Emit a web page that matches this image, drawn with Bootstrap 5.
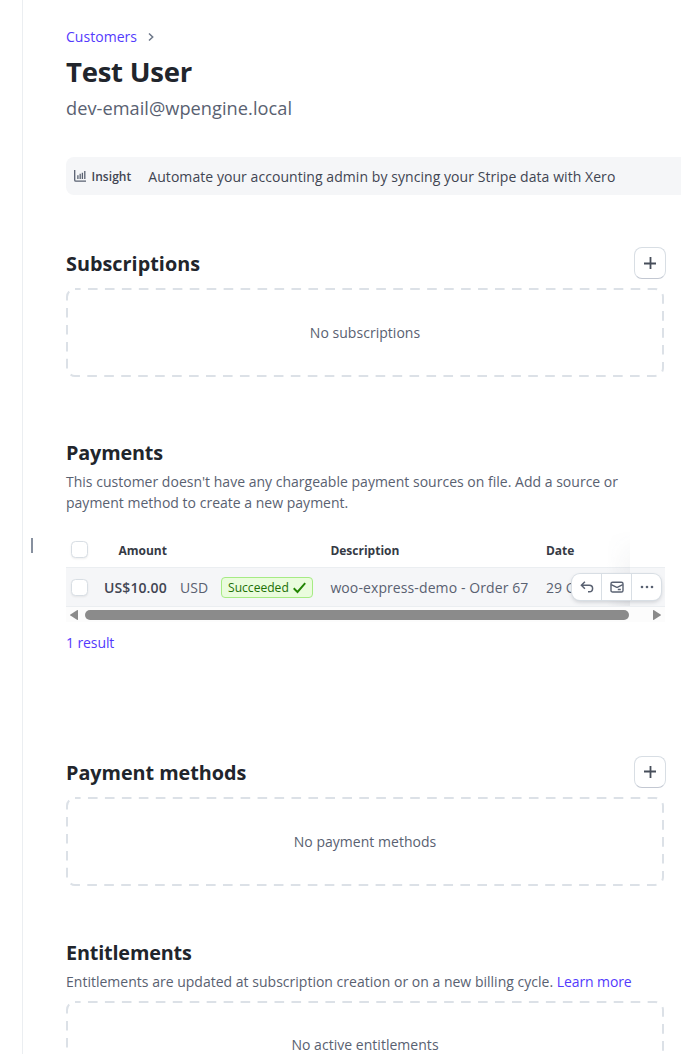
<!DOCTYPE html>
<html lang="en">
<head>
<meta charset="utf-8">
<meta name="viewport" content="width=device-width, initial-scale=1">
<title>Test User – Customers</title>
<link href="https://cdn.jsdelivr.net/npm/bootstrap@5.3.0/dist/css/bootstrap.min.css" rel="stylesheet">
<style>
  body { font: 400 14px/21px "Open Sans", "Noto Sans", sans-serif; color: #596171; background: #fff; height: 1054px; }
  a { color: #533afd; text-decoration: none; }
  .side-rail { width: 23px; border-right: 1px solid #ebeef1; }
  .resize-col { width: 43px; padding: 538px 0 0 8px; }
  .resize-grip { width: 2px; height: 15px; background: #87909f; }
  .page-main { padding-top: 26px; min-width: 0; }
  .crumbs { font-weight: 500; height: 21px; }
  .crumbs a { letter-spacing: .04px; }
  h1 { font-size: 27.5px; line-height: 36px; font-weight: 700; color: #21252c; margin: 7px 0 0; letter-spacing: -.25px; }
  .email { font-size: 18.2px; line-height: 26px; margin: 5px 0 0; letter-spacing: .04px; }
  .insight { margin-top: 36px; height: 38px; background: #f5f6f8; border-radius: 8px 0 0 8px; padding-left: 8px; color: #414552; }
  .insight b { font-size: 12px; font-weight: 600; margin: 0 17px 0 5.5px; letter-spacing: .04px; }
  .section { width: 600px; }
  .section h2 { position: relative; top: 1px; font-size: 19.8px; line-height: 28px; font-weight: 700; color: #21252c; margin: 0; letter-spacing: .03px; }
  .section h2.tight { letter-spacing: -.16px; }
  .add-btn { width: 32px; height: 32px; padding: 0; border: 1px solid #d8dee4; border-bottom-color: #c3c8d2; border-radius: 8px; background: #fff; }
  .empty-box { width: 598px; height: 89px; margin-top: 9px; padding-bottom: 1px; }
  .empty-box span { letter-spacing: .03px; }
  .empty-box svg { position: absolute; inset: 0; }
  .pay-table { width: 599px; margin-top: 17px; }
  .pay-grid { display: grid; grid-template-columns: 38px 226.4px 215.6px 84px 35px; align-items: center; }
  .head-row { height: 38px; padding-top: 3px; font-size: 12px; font-weight: 700; color: #353a44; border-bottom: 1px solid #ebeef1; }
  .data-row { height: 39px; background: #f5f6f8; border-bottom: 1px solid #ebeef1; }
  .check-box { width: 17px; height: 17px; margin: 0 0 0 5px; border: 1px solid #d8dee4; border-radius: 4.5px; background: #fff; box-shadow: 0 1px 2px rgba(33,37,44,.08); }
  .status-pill { font-size: 12.1px; line-height: 19px; height: 21px; margin-top: 1px; padding: 0 6px; border: 1px solid #a6eb84; border-radius: 4px; background: #eafcdd; color: #217005; width: 92px; }
  .edge-shade { position: absolute; top: 0; left: 540px; width: 24px; height: 76px; background: linear-gradient(to right, rgba(64,68,82,0), rgba(64,68,82,.07)); -webkit-mask-image: linear-gradient(to bottom, transparent, #000 85%); }
  .row-actions { position: absolute; left: 506px; top: 44px; height: 26px; width: 89px; border-radius: 8px; background: #fff; box-shadow: 0 0 0 1px #d8dee4, 0 2px 4px rgba(50,56,70,.22); }
  .row-actions span { flex: 1; height: 26px; }
  .row-actions span + span { border-left: 1px solid #d8dee4; }
  .hscroll { height: 15px; background: #fcfcfc; padding: 0 4px; }
  .hthumb { height: 10px; width: 544px; border-radius: 5px; background: #8b8b8b; margin: 0 auto 0 7px; }
</style>
</head>
<body class="d-flex overflow-hidden">
<aside class="side-rail flex-shrink-0"></aside>
<div class="resize-col flex-shrink-0"><div class="resize-grip"></div></div>
<main class="page-main flex-grow-1">
  <nav class="crumbs d-flex align-items-center">
    <a href="#">Customers</a>
    <svg width="10" height="10" style="margin-left:9px" viewBox="0 0 10 10" fill="none" stroke="#6c7688" stroke-width="1.5"><path d="M3 1.5 6.7 5 3 8.5"/></svg>
  </nav>
  <h1>Test User</h1>
  <p class="email">dev-email@wpengine.local</p>

  <div class="insight d-flex align-items-center">
    <svg width="12" height="12" viewBox="0 0 12 12" fill="none" stroke="#596171" stroke-width="1.3"><path d="M.7 0v10q0 1.2 1.2 1.2H12M3.9 5.2V9M6.2 3.8V9M8.4 2.8V9M10.8 1V9"/></svg>
    <b>Insight</b><span style="letter-spacing:.06px">Automate your accounting admin by syncing your Stripe data with Xero</span>
  </div>

  <section class="section" style="margin-top:52px">
    <div class="d-flex justify-content-between align-items-center">
      <h2>Subscriptions</h2>
      <button class="btn add-btn d-flex align-items-center justify-content-center" aria-label="Add subscription"><svg width="12" height="12" viewBox="0 0 12 12" stroke="#474e5a" stroke-width="1.8"><path d="M6.5 0v12M0 6.5h12"/></svg></button>
    </div>
    <div class="empty-box position-relative d-flex align-items-center justify-content-center">
      <svg width="598" height="89" fill="none" stroke="#dce1e7" stroke-width="2"><rect x="1" y="1" width="596" height="87" rx="8" stroke-dasharray="9.6 7.36" stroke-dashoffset="4"/></svg>
      <span>No subscriptions</span>
    </div>
  </section>

  <section class="section" style="margin-top:61px">
    <h2 class="tight">Payments</h2>
    <p class="mb-0" style="margin-top:5px;letter-spacing:.012px">This customer doesn't have any chargeable payment sources on file. Add a source or<br>payment method to create a new payment.</p>
    <div class="pay-table position-relative">
      <div class="pay-grid head-row">
        <div class="check-box" style="margin-top:-1px"></div><div style="padding-left:14.4px">Amount</div><div>Description</div><div>Date</div><div></div>
      </div>
      <div class="pay-grid data-row">
        <div class="check-box"></div>
        <div class="d-flex align-items-center">
          <span class="fw-semibold" style="color:#414552;width:76px;letter-spacing:.1px">US$10.00</span>
          <span style="width:41px">USD</span>
          <span class="status-pill d-flex align-items-center justify-content-between">Succeeded<svg width="13" height="12" viewBox="0 0 13 12" fill="none" stroke="#228403" stroke-width="1.9"><path d="M.7 6.3 4.5 10 12.2 1.2"/></svg></span>
        </div>
        <div style="letter-spacing:.1px">woo-express-demo - Order 67</div>
        <div class="text-nowrap overflow-hidden">29 Oct</div>
        <div></div>
      </div>
      <div class="edge-shade"></div>
      <div class="row-actions d-flex">
        <span class="d-flex align-items-center justify-content-center"><svg width="14" height="14" viewBox="0 0 14 14" fill="none" stroke="#596171" stroke-width="1.5"><path d="M4.9 1.7 1.4 5.2l3.5 3.5M1.6 5.2h7.7a3.2 3.2 0 0 1 0 6.6H8"/></svg></span>
        <span class="d-flex align-items-center justify-content-center"><svg width="14" height="14" viewBox="0 0 14 14" fill="none" stroke="#596171" stroke-width="1.4"><rect x="1" y="2.2" width="12" height="9.8" rx="1.6"/><path d="m1.2 4.6 5.1 2.6q.7.4 1.4 0l5.1-2.6M7.8 9.5h3"/></svg></span>
        <span class="d-flex align-items-center justify-content-center"><svg width="14" height="4" viewBox="0 0 14 4" fill="#596171"><circle cx="2" cy="2" r="1.3"/><circle cx="7" cy="2" r="1.3"/><circle cx="12" cy="2" r="1.3"/></svg></span>
      </div>
      <div class="hscroll d-flex align-items-center">
        <svg width="8" height="10" viewBox="0 0 8 10" fill="#8b8b8b"><path d="M8 0v10L7 9.8.4 5.6q-.7-.6 0-1.2L7 .2Z"/></svg>
        <div class="hthumb"></div>
        <svg width="8" height="10" viewBox="0 0 8 10" fill="#8b8b8b"><path d="M0 0v10l1-.2 6.6-4.2q.7-.6 0-1.2L1 .2Z"/></svg>
      </div>
    </div>
    <a class="d-block" href="#" style="margin-top:10px;letter-spacing:-.1px">1 result</a>
  </section>

  <section class="section" style="margin-top:103px">
    <div class="d-flex justify-content-between align-items-center">
      <h2 style="letter-spacing:-.03px">Payment methods</h2>
      <button class="btn add-btn d-flex align-items-center justify-content-center" aria-label="Add payment method"><svg width="12" height="12" viewBox="0 0 12 12" stroke="#474e5a" stroke-width="1.8"><path d="M6.5 0v12M0 5.5h12"/></svg></button>
    </div>
    <div class="empty-box position-relative d-flex align-items-center justify-content-center">
      <svg width="598" height="89" fill="none" stroke="#dce1e7" stroke-width="2"><rect x="1" y="1" width="596" height="87" rx="8" stroke-dasharray="9.6 7.36" stroke-dashoffset="4"/></svg>
      <span>No payment methods</span>
    </div>
  </section>

  <section class="section" style="margin-top:52px">
    <h2 class="tight">Entitlements</h2>
    <p class="mb-0" style="margin-top:5px;letter-spacing:.012px">Entitlements are updated at subscription creation or on a new billing cycle. <a href="#" style="letter-spacing:-.1px">Learn more</a></p>
    <div class="empty-box position-relative d-flex align-items-center justify-content-center" style="padding-bottom:3px">
      <svg width="598" height="89" fill="none" stroke="#dce1e7" stroke-width="2"><rect x="1" y="1" width="596" height="87" rx="8" stroke-dasharray="9.6 7.36" stroke-dashoffset="4"/></svg>
      <span>No active entitlements</span>
    </div>
  </section>
</main>
<script src="https://cdn.jsdelivr.net/npm/bootstrap@5.3.0/dist/js/bootstrap.bundle.min.js"></script>
</body>
</html>
